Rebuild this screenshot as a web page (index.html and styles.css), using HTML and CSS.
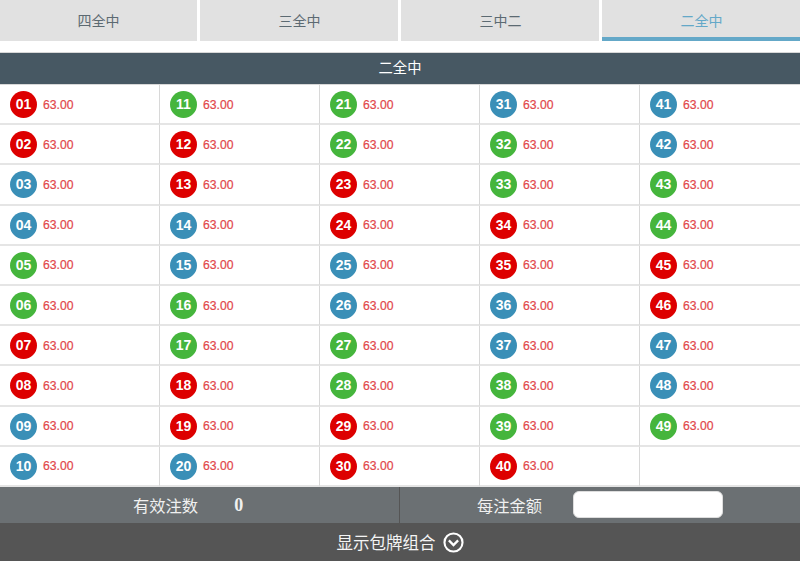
FILE: index.html

```html
<!DOCTYPE html>
<html lang="en">
<head>
    <meta charset="UTF-8">
    <meta name="viewport" content="width=device-width, initial-scale=1.0">
    <title>二全中</title>
    <link rel="stylesheet" href="styles.css">
</head>
<body>
    <!-- Tabs -->
    <div class="tabs">
        <div class="tab">四全中</div>
        <div class="tab">三全中</div>
        <div class="tab">三中二</div>
        <div class="tab active">二全中</div>
    </div>

    <div class="title">二全中</div>

    <!-- Number grid -->
    <div class="grid">
        <div class="cell"><span class="ball red">01</span><span class="odds">63.00</span></div>
        <div class="cell"><span class="ball green">11</span><span class="odds">63.00</span></div>
        <div class="cell"><span class="ball green">21</span><span class="odds">63.00</span></div>
        <div class="cell"><span class="ball blue">31</span><span class="odds">63.00</span></div>
        <div class="cell"><span class="ball blue">41</span><span class="odds">63.00</span></div>

        <div class="cell"><span class="ball red">02</span><span class="odds">63.00</span></div>
        <div class="cell"><span class="ball red">12</span><span class="odds">63.00</span></div>
        <div class="cell"><span class="ball green">22</span><span class="odds">63.00</span></div>
        <div class="cell"><span class="ball green">32</span><span class="odds">63.00</span></div>
        <div class="cell"><span class="ball blue">42</span><span class="odds">63.00</span></div>

        <div class="cell"><span class="ball blue">03</span><span class="odds">63.00</span></div>
        <div class="cell"><span class="ball red">13</span><span class="odds">63.00</span></div>
        <div class="cell"><span class="ball red">23</span><span class="odds">63.00</span></div>
        <div class="cell"><span class="ball green">33</span><span class="odds">63.00</span></div>
        <div class="cell"><span class="ball green">43</span><span class="odds">63.00</span></div>

        <div class="cell"><span class="ball blue">04</span><span class="odds">63.00</span></div>
        <div class="cell"><span class="ball blue">14</span><span class="odds">63.00</span></div>
        <div class="cell"><span class="ball red">24</span><span class="odds">63.00</span></div>
        <div class="cell"><span class="ball red">34</span><span class="odds">63.00</span></div>
        <div class="cell"><span class="ball green">44</span><span class="odds">63.00</span></div>

        <div class="cell"><span class="ball green">05</span><span class="odds">63.00</span></div>
        <div class="cell"><span class="ball blue">15</span><span class="odds">63.00</span></div>
        <div class="cell"><span class="ball blue">25</span><span class="odds">63.00</span></div>
        <div class="cell"><span class="ball red">35</span><span class="odds">63.00</span></div>
        <div class="cell"><span class="ball red">45</span><span class="odds">63.00</span></div>

        <div class="cell"><span class="ball green">06</span><span class="odds">63.00</span></div>
        <div class="cell"><span class="ball green">16</span><span class="odds">63.00</span></div>
        <div class="cell"><span class="ball blue">26</span><span class="odds">63.00</span></div>
        <div class="cell"><span class="ball blue">36</span><span class="odds">63.00</span></div>
        <div class="cell"><span class="ball red">46</span><span class="odds">63.00</span></div>

        <div class="cell"><span class="ball red">07</span><span class="odds">63.00</span></div>
        <div class="cell"><span class="ball green">17</span><span class="odds">63.00</span></div>
        <div class="cell"><span class="ball green">27</span><span class="odds">63.00</span></div>
        <div class="cell"><span class="ball blue">37</span><span class="odds">63.00</span></div>
        <div class="cell"><span class="ball blue">47</span><span class="odds">63.00</span></div>

        <div class="cell"><span class="ball red">08</span><span class="odds">63.00</span></div>
        <div class="cell"><span class="ball red">18</span><span class="odds">63.00</span></div>
        <div class="cell"><span class="ball green">28</span><span class="odds">63.00</span></div>
        <div class="cell"><span class="ball green">38</span><span class="odds">63.00</span></div>
        <div class="cell"><span class="ball blue">48</span><span class="odds">63.00</span></div>

        <div class="cell"><span class="ball blue">09</span><span class="odds">63.00</span></div>
        <div class="cell"><span class="ball red">19</span><span class="odds">63.00</span></div>
        <div class="cell"><span class="ball red">29</span><span class="odds">63.00</span></div>
        <div class="cell"><span class="ball green">39</span><span class="odds">63.00</span></div>
        <div class="cell"><span class="ball green">49</span><span class="odds">63.00</span></div>

        <div class="cell"><span class="ball blue">10</span><span class="odds">63.00</span></div>
        <div class="cell"><span class="ball blue">20</span><span class="odds">63.00</span></div>
        <div class="cell"><span class="ball red">30</span><span class="odds">63.00</span></div>
        <div class="cell"><span class="ball red">40</span><span class="odds">63.00</span></div>
        <div class="cell"></div>
    </div>

    <!-- Totals -->
    <div class="totals">
        <div class="total-left">
            <span class="total-label">有效注数</span>
            <span class="total-count">0</span>
        </div>
        <div class="total-right">
            <label class="total-label" for="amount">每注金额</label>
            <input type="text" id="amount" class="amount">
        </div>
    </div>

    <div class="toggle">
        <span>显示包牌组合</span>
        <svg class="toggle-icon" width="21" height="21" viewBox="0 0 20 20">
            <circle cx="10" cy="10" r="8.6" fill="none" stroke="#fff" stroke-width="2"/>
            <path d="M5.6 8 L10 12.4 L14.4 8" fill="none" stroke="#fff" stroke-width="2.2"/>
        </svg>
    </div>
</body>
</html>
```

FILE: styles.css

```css
* {
    margin: 0;
    padding: 0;
    box-sizing: border-box;
}

html, body {
    height: 561px;
    overflow: hidden;
}

body {
    font-family: "Liberation Sans", "Noto Sans CJK SC", sans-serif;
    background-color: #fff;
}

/* Tabs */
.tabs {
    display: flex;
    gap: 3px;
    height: 41px;
    margin-left: -1px;
}

.tab {
    flex: 1;
    padding-left: 1px;
    background-color: #e1e1e1;
    color: #5c6a72;
    font-size: 14px;
    line-height: 42px;
    text-align: center;
}

.tab.active {
    color: #64a8c8;
    border-bottom: 4px solid #64a8c8;
}

.title {
    margin-top: 11px;
    height: 33px;
    background-color: #475863;
    border-top: 1px solid #d8d8d8;
    border-bottom: 1px solid #d8d8d8;
    color: #fff;
    font-size: 14.3px;
    line-height: 31px;
    text-align: center;
}

/* Number grid */
.grid {
    display: grid;
    grid-template-columns: repeat(5, 1fr);
    grid-template-rows: repeat(10, 1fr);
    height: 402px;
}

.cell {
    display: flex;
    align-items: center;
    padding-top: 1px;
    padding-left: 10px;
    border-right: 1px solid #d8d8d8;
    border-bottom: 2px solid #e5e5e5;
}

.cell:nth-child(5n) {
    border-right: none;
}

.ball {
    width: 27px;
    height: 27px;
    border-radius: 50%;
    color: #fff;
    font-size: 14px;
    font-weight: bold;
    line-height: 27px;
    text-align: center;
}

.red {
    background-color: #dd0000;
}

.green {
    background-color: #45b53c;
}

.blue {
    background-color: #3a8fb7;
}

.odds {
    margin-left: 6px;
    color: #e2474b;
    font-size: 12.2px;
    -webkit-text-stroke: 0.2px #e2474b;
}

/* Totals */
.totals {
    display: flex;
    height: 36px;
    background-color: #6b7073;
    color: #f0f0f0;
}

.total-left, .total-right {
    width: 50%;
    display: flex;
    align-items: center;
}

.total-left {
    padding-left: 133px;
    border-right: 1px solid #555;
}

.total-right {
    padding-left: 77px;
}

.total-label {
    font-size: 16.3px;
}

.total-count {
    margin-left: 36px;
    font-family: "Liberation Serif", serif;
    font-size: 18px;
    font-weight: bold;
}

.amount {
    width: 150px;
    height: 27px;
    margin-left: 31px;
    margin-bottom: 2px;
    border: 1px solid #ddd;
    border-radius: 6px;
    background-color: #fff;
}

.toggle {
    display: flex;
    align-items: center;
    justify-content: center;
    gap: 7px;
    height: 38px;
    background-color: #555;
    color: #f4f4f4;
    font-size: 16.5px;
}
```
